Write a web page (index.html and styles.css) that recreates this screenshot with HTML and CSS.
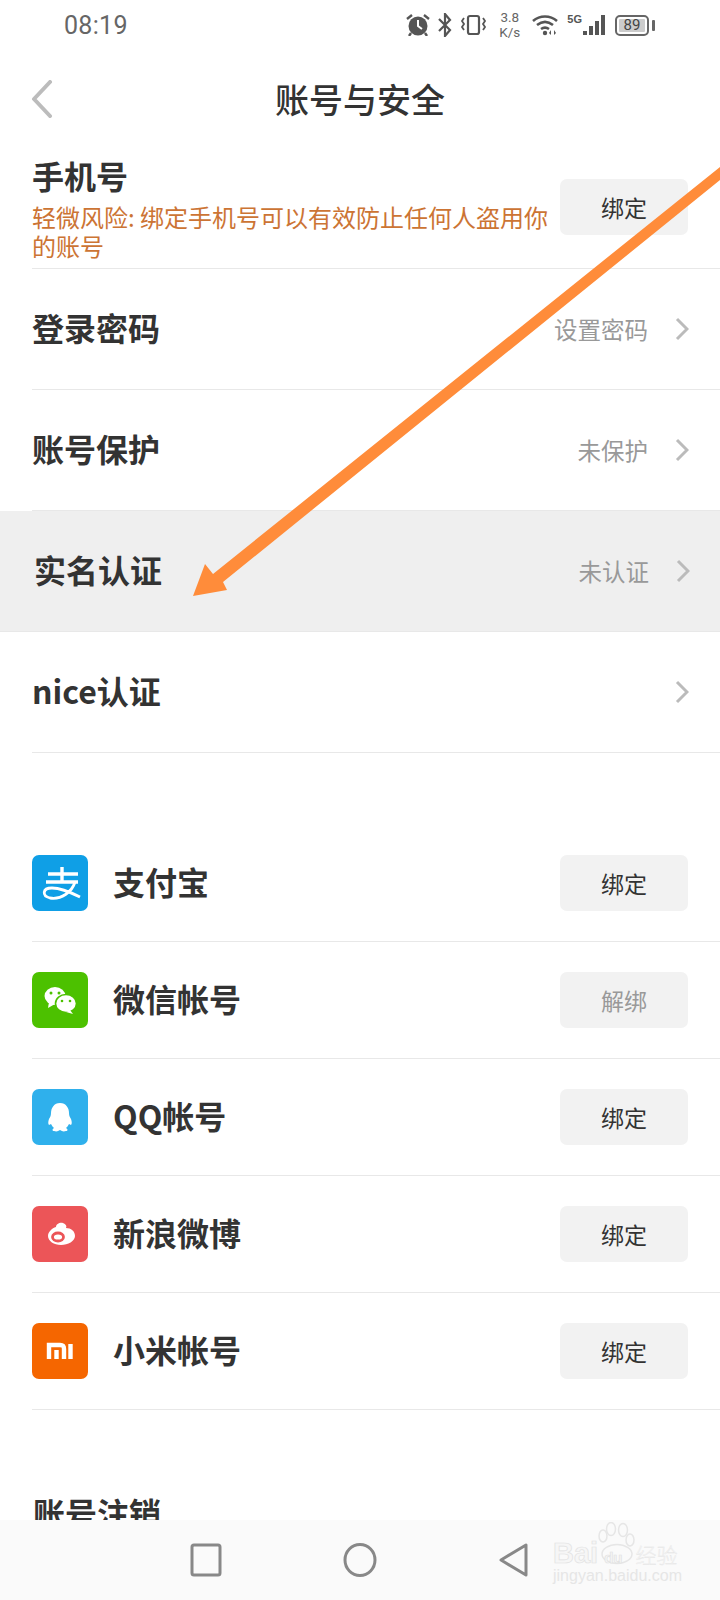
FILE: index.html
```html
<!DOCTYPE html>
<html lang="zh-CN">
<head>
    <meta charset="UTF-8">
    <meta name="viewport" content="width=device-width, initial-scale=1.0">
    <title>账号与安全</title>
    <link rel="stylesheet" href="styles.css">
</head>
<body>
    <div class="phone">
        <!-- status bar -->
        <div class="status-bar">
            <span class="time">08:19</span>
            <div class="status-icons">
                <svg width="24" height="22" viewBox="0 0 24 22"><circle cx="12" cy="12" r="9.500" fill="#555"/><path d="M12 6v6l4 3" fill="none" stroke="#fff" stroke-width="2"/><path d="M1 5l5-4M23 5l-5-4M5 19l-2 3M19 19l2 3" stroke="#555" stroke-width="2.400" fill="none"/></svg>
                <svg width="14" height="24" viewBox="0 0 14 24"><path d="M1 6l11 11-5 6V1l5 6L1 18" fill="none" stroke="#555" stroke-width="2.200"/></svg>
                <svg width="27" height="22" viewBox="0 0 27 22"><rect x="8" y="2" width="11" height="18" rx="2" fill="none" stroke="#555" stroke-width="2.200"/><path d="M4 4l-2 3 2 3-2 3 2 3M23 4l2 3-2 3 2 3-2 3" fill="none" stroke="#555" stroke-width="1.800"/></svg>
                <div class="speed"><span>3.8</span><span>K/s</span></div>
                <svg width="27" height="22" viewBox="0 0 27 22"><path d="M1 7c7-6 17-6 24 0M5 11c5-4 11-4 16 0M9 15c3-2 5-2 8 0" fill="none" stroke="#555" stroke-width="2.600"/><circle cx="13" cy="19" r="2.200" fill="#555"/><path d="M19 16v5l-2-2zM22 16v5l2-2z" fill="#555"/></svg>
                <div class="signal">
                    <span class="five-g">5G</span>
                    <svg width="25" height="22" viewBox="0 0 25 22"><path d="M1 17h4v4H1zM7 12h4v9H7zM13 7h4v14h-4zM19 1h4v20h-4z" fill="#555"/></svg>
                </div>
                <div class="battery">
                    <div class="battery-body"><span class="battery-level">89</span></div>
                    <i class="battery-nub"></i>
                </div>
            </div>
        </div>

        <!-- title -->
        <div class="header">
            <svg class="back" width="22" height="38" viewBox="0 0 22 38"><path d="M19 2L3 19l16 17" fill="none" stroke="#bcbcbc" stroke-width="4" stroke-linecap="round" stroke-linejoin="round"/></svg>
            <h1>账号与安全</h1>
        </div>

        <div class="settings">
            <div class="row row-phone">
                <div class="phone-text">
                    <div class="label">手机号</div>
                    <div class="warning">轻微风险: 绑定手机号可以有效防止任何人盗用你的账号</div>
                </div>
                <button class="bind">绑定</button>
            </div>
            <div class="row">
                <span class="label">登录密码</span>
                <span class="value">设置密码</span>
                <svg class="chevron" width="14" height="24" viewBox="0 0 14 24"><path d="M2 2l10 10L2 22" fill="none" stroke="#bbb" stroke-width="3"/></svg>
            </div>
            <div class="row">
                <span class="label">账号保护</span>
                <span class="value">未保护</span>
                <svg class="chevron" width="14" height="24" viewBox="0 0 14 24"><path d="M2 2l10 10L2 22" fill="none" stroke="#bbb" stroke-width="3"/></svg>
            </div>
            <div class="row row-active">
                <span class="label">实名认证</span>
                <span class="value">未认证</span>
                <svg class="chevron" width="14" height="24" viewBox="0 0 14 24"><path d="M2 2l10 10L2 22" fill="none" stroke="#bbb" stroke-width="3"/></svg>
            </div>
            <div class="row">
                <span class="label">nice认证</span>
                <svg class="chevron" width="14" height="24" viewBox="0 0 14 24"><path d="M2 2l10 10L2 22" fill="none" stroke="#bbb" stroke-width="3"/></svg>
            </div>
        </div>

        <div class="accounts">
            <div class="account">
                <svg class="logo" viewBox="0 0 56 56"><rect width="56" height="56" rx="7" fill="#0f9fe6"/><path d="M16 19h30M14 27h32M30 12v15" fill="none" stroke="#fff" stroke-width="3.400"/><path d="M43 27c-3 10-14 18-25 16-8-2-8-10 2-10 10 0 20 5 28 9" fill="none" stroke="#fff" stroke-width="2.800"/></svg>
                <span class="label">支付宝</span>
                <button class="bind">绑定</button>
            </div>
            <div class="account">
                <svg class="logo" viewBox="0 0 56 56"><rect width="56" height="56" rx="7" fill="#4cc100"/><ellipse cx="23" cy="24" rx="10.500" ry="9" fill="#fff"/><path d="M17 30l-1 6 7-4z" fill="#fff"/><ellipse cx="34" cy="31.500" rx="10.500" ry="9" fill="#fff" stroke="#4cc100" stroke-width="1.600"/><path d="M38 38l3 4-7-2z" fill="#fff"/><circle cx="19" cy="21" r="1.500" fill="#4cc100"/><circle cx="27" cy="21" r="1.500" fill="#4cc100"/><circle cx="30" cy="29" r="1.300" fill="#4cc100"/><circle cx="38" cy="29" r="1.300" fill="#4cc100"/></svg>
                <span class="label">微信帐号</span>
                <button class="bind bind-done">解绑</button>
            </div>
            <div class="account">
                <svg class="logo" viewBox="0 0 56 56"><rect width="56" height="56" rx="7" fill="#2fb0ec"/><path d="M28 14c-6 0-9 5-9 10 0 3-1 4-2 6-1 3-1 5 0 6l2-1c1 2 2 3 3 4-2 1-2 3 0 3 3 1 4 0 6-1 2 1 3 2 6 1 2 0 2-2 0-3 1-1 2-2 3-4l2 1c1-1 1-3 0-6-1-2-2-3-2-6 0-5-3-10-9-10z" fill="#fff"/></svg>
                <span class="label">QQ帐号</span>
                <button class="bind">绑定</button>
            </div>
            <div class="account">
                <svg class="logo" viewBox="0 0 56 56"><rect width="56" height="56" rx="7" fill="#ec5558"/><path d="M16 30c0-4 4-8 8-9 0-3 4-5 7-4 3 1 4 3 3 5 5 0 9 3 9 8 0 5-7 9-14 9s-13-4-13-9z" fill="#fff"/><ellipse cx="26" cy="31" rx="5.500" ry="4" fill="none" stroke="#ec5558" stroke-width="2.800"/></svg>
                <span class="label">新浪微博</span>
                <button class="bind">绑定</button>
            </div>
            <div class="account">
                <svg class="logo" viewBox="0 0 56 56"><rect width="56" height="56" rx="7" fill="#f56600"/><path d="M17 36V22h11c3 0 4 1 4 4v10M24.500 27v9M38.500 21v15" fill="none" stroke="#fff" stroke-width="4.400"/></svg>
                <span class="label">小米帐号</span>
                <button class="bind">绑定</button>
            </div>
        </div>

        <div class="close-account"><span class="label">账号注销</span></div>

        <!-- orange arrow drawn on top of the screenshot -->
        <svg class="arrow" width="720" height="1600" viewBox="0 0 720 1600"><polygon points="720,180 223,582 227,590 193,596 205,564 213,574 720,167" fill="#ff8c3a"/></svg>

        <!-- system navigation -->
        <div class="nav-bar">
            <svg width="34" height="36" viewBox="0 0 34 36"><rect x="3" y="3" width="28" height="30" rx="2" fill="none" stroke="#888" stroke-width="3"/></svg>
            <svg width="34" height="36" viewBox="0 0 34 36"><ellipse cx="17" cy="18" rx="15" ry="15.500" fill="none" stroke="#888" stroke-width="3"/></svg>
            <svg width="34" height="36" viewBox="0 0 34 36"><path d="M4 18L29 3v30z" fill="none" stroke="#888" stroke-width="3" stroke-linejoin="round"/></svg>
        </div>

        <div class="watermark">
            <svg class="paw" width="44" height="44" viewBox="0 0 44 44"><g fill="none" stroke="#e6e6e6" stroke-width="1.500"><ellipse cx="6" cy="14" rx="4" ry="6"/><ellipse cx="14" cy="7" rx="4.500" ry="6.500"/><ellipse cx="26" cy="8" rx="4.500" ry="6.500"/><ellipse cx="33" cy="18" rx="4" ry="6"/><ellipse cx="20" cy="32" rx="15" ry="9.500"/></g></svg>
            <div class="mark-top"><span class="mark-bai">Bai</span><span class="mark-du">du</span><span class="mark-cn">经验</span></div>
            <div class="mark-url">jingyan.baidu.com</div>
        </div>
    </div>
</body>
</html>
```

FILE: styles.css
```css
* {
    box-sizing: border-box;
}
html, body {
    margin: 0;
    padding: 0;
}
body {
    font-family: "Noto Sans CJK SC", "Liberation Sans", sans-serif;
    background-color: #fff;
    color: #333;
}
.phone {
    position: relative;
    width: 720px;
    height: 1600px;
    overflow: hidden;
    background-color: #fff;
}

/* status bar */
.status-bar {
    display: flex;
    justify-content: space-between;
    align-items: center;
    height: 50px;
    padding: 0 65px 0 64px;
}
.time {
    font-family: Roboto, sans-serif;
    font-size: 25px;
    letter-spacing: 0.3px;
    color: #666;
}
.status-icons {
    display: flex;
    align-items: center;
    gap: 8px;
}
.speed {
    display: flex;
    flex-direction: column;
    align-items: center;
    margin: 0 4px;
    font-family: Roboto, sans-serif;
    font-size: 13.500px;
    line-height: 15px;
    color: #666;
}
.signal {
    display: flex;
    align-items: flex-start;
}
.five-g {
    font-family: "Liberation Sans", sans-serif;
    font-size: 11px;
    font-weight: 700;
    line-height: 10px;
    color: #555;
}
.battery {
    display: flex;
    align-items: center;
    gap: 3px;
}
.battery-body {
    width: 34px;
    height: 21px;
    padding: 2px;
    border: 2px solid #666;
    border-radius: 5px;
}
.battery-level {
    display: block;
    width: 26px;
    height: 13px;
    background-color: #ccc;
    border-radius: 1px;
    font-family: Roboto, sans-serif;
    font-size: 15px;
    line-height: 13px;
    text-align: center;
    color: #444;
}
.battery-nub {
    width: 3px;
    height: 11px;
    background-color: #666;
    border-radius: 1px;
}

/* title */
.header {
    display: flex;
    align-items: center;
    justify-content: center;
    position: relative;
    height: 98px;
}
.header h1 {
    margin: 0;
    font-size: 34px;
    font-weight: 500;
    color: #333;
    line-height: 1;
}
.back {
    position: absolute;
    left: 31px;
    top: 30px;
}

/* settings rows */
.row {
    display: flex;
    align-items: center;
    height: 121px;
    margin-left: 32px;
    padding-right: 31px;
    border-bottom: 1px solid #e8e8e8;
}
.label {
    font-size: 32px;
    font-weight: 700;
    line-height: 1.2;
    color: #333;
}
.row .label, .account .label {
    flex: 1;
    padding-bottom: 4px;
}
.value {
    font-size: 23.500px;
    color: #999;
}
.chevron {
    margin-left: 27px;
}
.row-active {
    margin-left: 0;
    padding-left: 34px;
    padding-right: 30px;
    background-color: #efefef;
}
.row-phone {
    justify-content: space-between;
    padding-right: 32px;
}
.phone-text {
    width: 522px;
}
.phone-text .label {
    margin-bottom: 4px;
}
.warning {
    font-size: 24px;
    line-height: 29px;
    color: #cc7434;
}
.bind {
    flex: none;
    width: 128px;
    height: 56px;
    margin-bottom: 2px;
    border: 0;
    border-radius: 7px;
    background-color: #f2f2f2;
    font-family: inherit;
    font-size: 23px;
    color: #333;
}
.account .bind {
    margin-bottom: 0;
}
.bind-done {
    color: #999;
}

/* bound accounts */
.accounts {
    margin-top: 72px;
}
.account {
    display: flex;
    align-items: center;
    height: 117px;
    margin-left: 32px;
    padding-right: 32px;
    border-bottom: 1px solid #e8e8e8;
}
.logo {
    flex: none;
    width: 56px;
    height: 56px;
    margin-right: 25px;
}

.close-account {
    padding: 83px 0 0 33px;
}

/* overlays */
.arrow {
    position: absolute;
    left: 0;
    top: 0;
    pointer-events: none;
}
.nav-bar {
    position: absolute;
    left: 0;
    right: 0;
    bottom: 0;
    display: flex;
    justify-content: center;
    align-items: center;
    gap: 120px;
    height: 80px;
    background-color: #fafafa;
}
.watermark {
    position: absolute;
    left: 553px;
    top: 1522px;
    width: 130px;
    height: 62px;
    color: #f6f6f6;
}
.paw {
    position: absolute;
    left: 44px;
    top: 0;
}
.mark-top {
    position: absolute;
    left: 0;
    top: 18px;
    display: flex;
    align-items: baseline;
    font-family: "Liberation Sans", sans-serif;
    line-height: 26px;
    -webkit-text-stroke: 0.7px #e2e2e2;
}
.mark-bai {
    font-size: 29px;
    font-weight: 700;
}
.mark-du {
    margin-left: 6px;
    font-size: 15px;
    font-weight: 700;
}
.mark-cn {
    margin-left: 13px;
    font-family: "Noto Sans CJK SC", sans-serif;
    font-size: 21px;
    font-weight: 300;
    -webkit-text-stroke: 0.3px #e2e2e2;
}
.mark-url {
    position: absolute;
    left: 0;
    top: 46px;
    font-family: "Liberation Sans", sans-serif;
    font-size: 16px;
    line-height: 16px;
    white-space: nowrap;
    color: #e6e6e6;
}
```
